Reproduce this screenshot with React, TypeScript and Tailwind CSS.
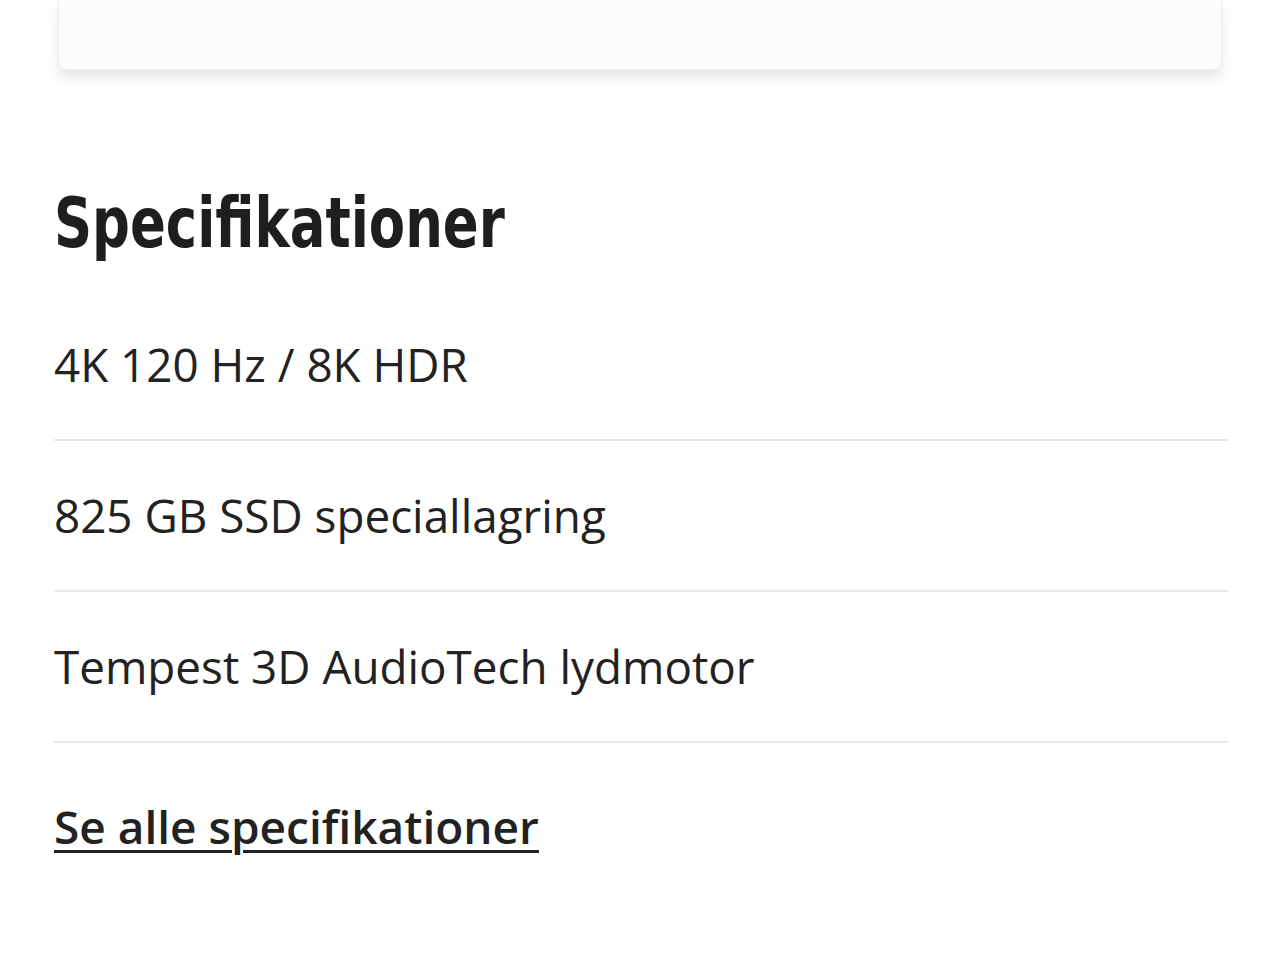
import React from 'react';

const specs = ['4K 120 Hz / 8K HDR', '825 GB SSD speciallagring', 'Tempest 3D AudioTech lydmotor'];

const App: React.FC = () => {
  return (
    <div className="min-h-screen bg-white text-[#222] overflow-hidden">
      <div className="px-[54px] pr-[52px]">
        {/* tail of the product card above */}
        <div className="ml-1 mr-1.5 h-[70px] rounded-b-lg bg-[#fcfcfc] border border-t-0 border-[#ededed] shadow-[0_8px_14px_rgba(0,0,0,0.10)]"></div>

        <h2
          className="mt-[118px] inline-block origin-left scale-x-[0.84] text-[70px] leading-none font-bold text-[#1e1e1e]"
          style={{ fontFamily: '"DejaVu Sans Condensed", "Liberation Sans Narrow", "Roboto", sans-serif' }}
        >
          Specifikationer
        </h2>

        <ul className="mt-[32px]" style={{ fontFamily: '"Open Sans", "Noto Sans", sans-serif' }}>
          {specs.map((s) => (
            <li key={s} className="py-[44px] text-[45.8px] leading-[61px] border-b-2 border-[#e9e9e9]">
              {s}
            </li>
          ))}
        </ul>

        <a
          href="#"
          className="inline-block mt-[53px] text-[46px] leading-[60px] font-semibold underline decoration-[3px] underline-offset-[6px] text-[#222]"
          style={{ fontFamily: '"Open Sans", "Noto Sans", sans-serif' }}
        >
          Se alle specifikationer
        </a>
      </div>
    </div>
  );
};

export default App;
